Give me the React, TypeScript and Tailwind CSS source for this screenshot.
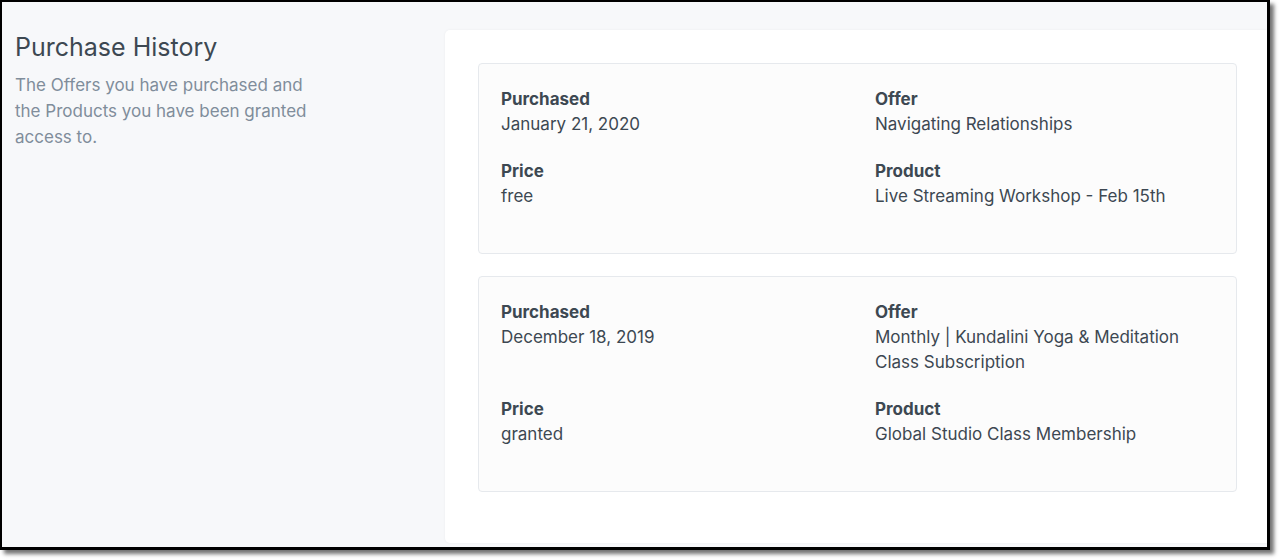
const purchases = [
  {
    purchased: 'January 21, 2020',
    offer: 'Navigating Relationships',
    price: 'free',
    product: 'Live Streaming Workshop - Feb 15th',
  },
  {
    purchased: 'December 18, 2019',
    offer: 'Monthly | Kundalini Yoga & Meditation Class Subscription',
    price: 'granted',
    product: 'Global Studio Class Membership',
  },
]

function Field({ label, value }: { label: string; value: string }) {
  return (
    <div className="mb-[22px]">
      <p className="text-[17px] font-bold leading-[25px] text-[#3d4852]">{label}</p>
      <p className="text-[17px] leading-[25px] text-[#3d4852]">{value}</p>
    </div>
  )
}

export default function App() {
  return (
    <div
      className="h-[560px] w-[1279px] overflow-hidden bg-white"
      style={{ fontFamily: 'Inter, "Noto Sans", sans-serif' }}
    >
      <div className="flex h-[550px] w-[1270px] overflow-hidden border-t-2 border-r-[3px] border-b-[3px] border-l-2 border-black bg-[#f7f8fa] shadow-[4px_4px_4px_rgba(0,0,0,0.55)]">
        <div className="w-[443px] shrink-0 pt-[29px] pl-[13px]">
          <h1 className="text-[25px] leading-[32px] font-normal text-[#3d4852]">Purchase History</h1>
          <p className="mt-[9px] w-[300px] text-[17px] leading-[26px] text-[#808d9b]">
            The Offers you have purchased and the Products you have been granted access to.
          </p>
        </div>
        <div className="mt-[28px] mb-[4px] flex-1 rounded-l-[5px] bg-white pt-[33px] pr-[30px] pl-[33px] shadow-[0_0_3px_rgba(0,0,0,0.05)]">
          <div className="flex flex-col gap-[22px]">
            {purchases.map((p) => (
              <div
                key={p.purchased}
                className="grid grid-cols-[374px_1fr] rounded-[4px] border border-[#e6e9ed] bg-[#fcfcfc] pt-[23px] pr-[23px] pb-[22px] pl-[22px]"
              >
                <Field label="Purchased" value={p.purchased} />
                <Field label="Offer" value={p.offer} />
                <Field label="Price" value={p.price} />
                <Field label="Product" value={p.product} />
              </div>
            ))}
          </div>
        </div>
      </div>
    </div>
  )
}
